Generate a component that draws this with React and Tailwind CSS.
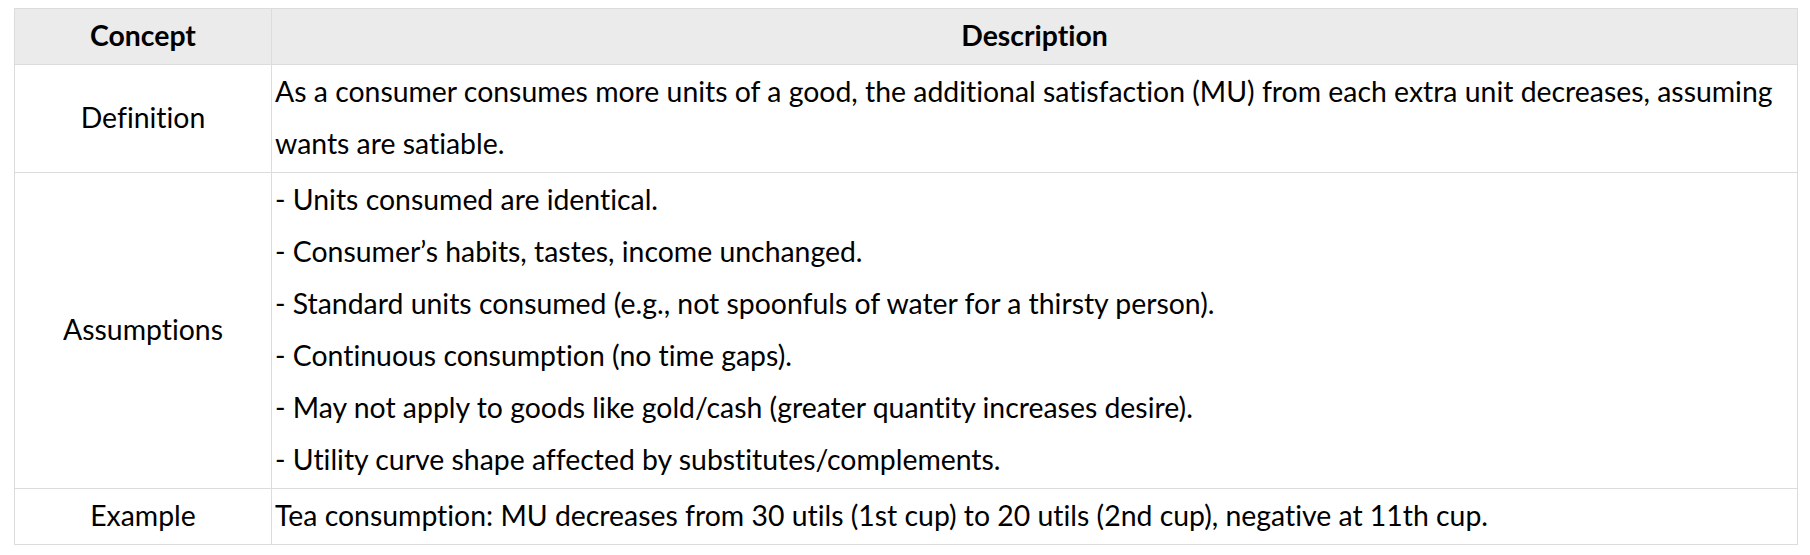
const rows = [
  {
    concept: 'Definition',
    lines: [
      'As a consumer consumes more units of a good, the additional satisfaction (MU) from each extra unit decreases, assuming wants are satiable.',
    ],
  },
  {
    concept: 'Assumptions',
    lines: [
      '- Units consumed are identical.',
      '- Consumer’s habits, tastes, income unchanged.',
      '- Standard units consumed (e.g., not spoonfuls of water for a thirsty person).',
      '- Continuous consumption (no time gaps).',
      '- May not apply to goods like gold/cash (greater quantity increases desire).',
      '- Utility curve shape affected by substitutes/complements.',
    ],
  },
  {
    concept: 'Example',
    lines: [
      'Tea consumption: MU decreases from 30 utils (1st cup) to 20 utils (2nd cup), negative at 11th cup.',
    ],
  },
];

export default function App() {
  return (
    <div className="min-h-[555px] bg-white pt-2 pl-[14px] pr-[13px] font-['Lato','Open_Sans',sans-serif] text-black [font-variant-ligatures:none]">
      <table className="w-[1784px] table-fixed border-collapse border border-[#dcdcdc] text-[28.4px] leading-[52px]">
        <colgroup>
          <col className="w-[257px]" />
          <col />
        </colgroup>
        <thead>
          <tr className="bg-[#ebebeb]">
            <th className="border border-[#dcdcdc] px-[3px] pt-0 pb-[3px] text-center font-bold">Concept</th>
            <th className="border border-[#dcdcdc] px-[3px] pt-0 pb-[3px] text-center font-bold">Description</th>
          </tr>
        </thead>
        <tbody>
          {rows.map(row => (
            <tr key={row.concept}>
              <td className="border border-[#dcdcdc] px-[3px] pt-0 pb-[3px] text-center align-middle">{row.concept}</td>
              <td className="border border-[#dcdcdc] px-[3px] pt-0 pb-[3px] text-left align-middle">
                {row.lines.map((line, i) => (
                  <div key={i}>{line}</div>
                ))}
              </td>
            </tr>
          ))}
        </tbody>
      </table>
    </div>
  );
}
